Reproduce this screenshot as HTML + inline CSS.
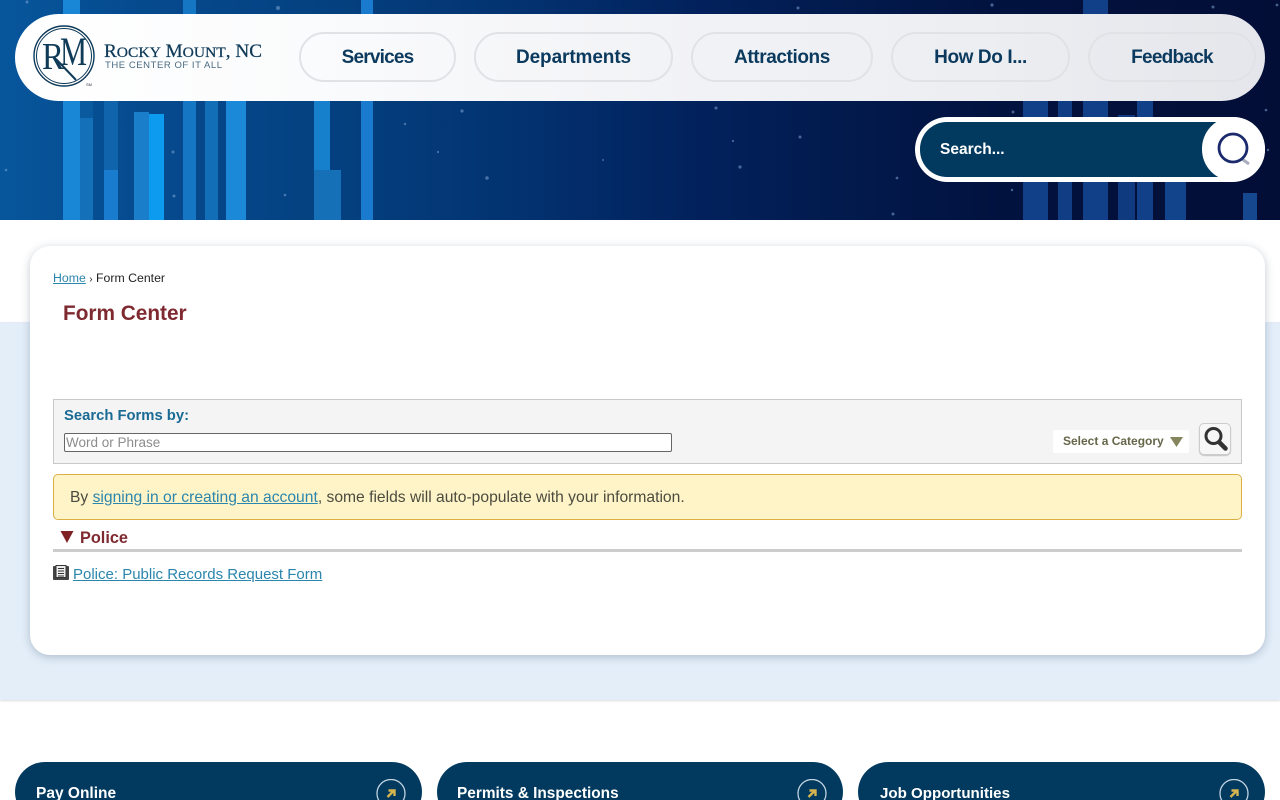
<!DOCTYPE html>
<html lang="en"><head><meta charset="utf-8"><title>Form Center | Rocky Mount, NC</title>
<style>
*{box-sizing:border-box}
html,body{margin:0;padding:0;width:1280px;height:800px;overflow:hidden;background:#fff;font-family:"Liberation Sans",sans-serif}
#page{position:relative;width:1280px;height:800px;overflow:hidden;background:#fff}
.a{position:absolute}
#hdr{left:0;top:0;width:1280px;height:220px;overflow:hidden;background:linear-gradient(90deg,#07569c 0,#064b8f 130px,#04407f 340px,#033270 520px,#02215c 700px,#021a4c 850px,#02123f 1000px,#020e36 1280px)}
.b{position:absolute}
#nav{left:15px;top:14px;width:1250px;height:87px;border-radius:43.5px;background:linear-gradient(90deg,#fff 0,#fafbfc 300px,#f2f3f6 640px,#eceef2 960px,#e5e6eb 1250px)}
.btn{position:absolute;top:32px;height:50px;border:2px solid #e1e2e6;border-radius:25px;color:#0b3a5e;font-weight:bold;font-size:19px;line-height:48px;text-align:center}
#search{left:915px;top:117px;width:350px;height:65px;border-radius:32.5px;background:#fff}
#sin{left:920px;top:122px;width:310px;height:55px;border-radius:27px 0 0 27px;background:#023a5f;color:#fff;font-size:15.5px;font-weight:bold;line-height:55px;padding-left:20px}
#sc{left:1202px;top:117px;width:63px;height:64px;border-radius:32px;background:#fff}
#band{left:0;top:322px;width:1280px;height:378px;background:#e3eef9;box-shadow:0 1px 2px rgba(0,0,0,.14)}
#card{left:30px;top:246px;width:1235px;height:409px;border-radius:20px;background:#fff;box-shadow:0 2px 9px rgba(40,60,90,.28)}
a{color:#2b86ad;text-decoration:underline}
.tile{position:absolute;top:762px;height:60px;border-radius:30px;background:#023a5f;color:#fff;font-weight:bold;line-height:63px;padding-left:21px}
.tile svg{position:absolute;top:17px}
</style></head><body><div id="page">
<div class="a" id="hdr">
<div class="b" style="left:63px;top:0;width:17px;height:220px;background:#1a87d6"></div>
<div class="b" style="left:80px;top:118px;width:13px;height:102px;background:#1470b8"></div>
<div class="b" style="left:80px;top:100px;width:13px;height:18px;background:#0a5aa0"></div>
<div class="b" style="left:104px;top:100px;width:14px;height:70px;background:#0f64ac"></div>
<div class="b" style="left:104px;top:170px;width:14px;height:50px;background:#1a7cce"></div>
<div class="b" style="left:134px;top:112px;width:15px;height:108px;background:#1a7ecb"></div>
<div class="b" style="left:149px;top:114px;width:15px;height:106px;background:#0c9bee"></div>
<div class="b" style="left:183px;top:0;width:13px;height:220px;background:#1577c3"></div>
<div class="b" style="left:205px;top:100px;width:13px;height:120px;background:#126eb6"></div>
<div class="b" style="left:226px;top:100px;width:20px;height:120px;background:#1b88d8"></div>
<div class="b" style="left:314px;top:100px;width:16px;height:70px;background:#1680cc"></div>
<div class="b" style="left:314px;top:170px;width:27px;height:50px;background:#1570b8"></div>
<div class="b" style="left:361px;top:0;width:12px;height:220px;background:#1a7bce"></div>
<div class="b" style="left:1023px;top:100px;width:25px;height:120px;background:#113f88"></div>
<div class="b" style="left:1058px;top:100px;width:14px;height:120px;background:#103d84"></div>
<div class="b" style="left:1083px;top:0;width:25px;height:220px;background:#124088"></div>
<div class="b" style="left:1118px;top:115px;width:17px;height:105px;background:#103a80"></div>
<div class="b" style="left:1137px;top:100px;width:16px;height:120px;background:#114088"></div>
<div class="b" style="left:1165px;top:182px;width:21px;height:38px;background:#12448c"></div>
<div class="b" style="left:1243px;top:193px;width:14px;height:27px;background:#15488e"></div>
<svg class="b" style="left:0;top:0" width="1280" height="220" fill="#7fa6d6" fill-opacity=".55">
<circle cx="27" cy="2" r="1.5"/><circle cx="278" cy="8" r="2"/><circle cx="173" cy="152" r="1.5"/><circle cx="6" cy="170" r="1.3"/><circle cx="174" cy="196" r="1.5"/><circle cx="285" cy="195" r="1.3"/><circle cx="462" cy="111" r="1.6"/><circle cx="405" cy="124" r="1.2"/><circle cx="487" cy="178" r="1.8"/><circle cx="438" cy="152" r="1.1"/><circle cx="603" cy="160" r="1"/><circle cx="716" cy="108" r="1.5"/><circle cx="733" cy="141" r="1.1"/><circle cx="800" cy="137" r="1.5"/><circle cx="740" cy="167" r="1.6"/><circle cx="893" cy="214" r="1.5"/><circle cx="897" cy="178" r="1.4"/><circle cx="798" cy="8" r="1.5"/><circle cx="992" cy="5" r="1.6"/><circle cx="1213" cy="7" r="1.5"/><circle cx="1277" cy="5" r="1.4"/><circle cx="1013" cy="112" r="1.5"/><circle cx="1266" cy="110" r="1.3"/><circle cx="1012" cy="190" r="1.2"/><circle cx="1268" cy="150" r="1.2"/>
</svg>
</div>

<div class="a" id="nav"></div>
<svg class="a" style="left:25px;top:15px" width="245" height="80">
<circle cx="39" cy="41" r="30" fill="none" stroke="#0f3a58" stroke-width="1.4"/>
<circle cx="39" cy="41" r="27.5" fill="none" stroke="#0f3a58" stroke-width="1"/>
<text x="17" y="54" font-family="Liberation Serif,serif" font-size="38" fill="#0f3a58" textLength="22" lengthAdjust="spacingAndGlyphs">R</text>
<text x="35" y="50" font-family="Liberation Serif,serif" font-size="40" fill="#0f3a58" textLength="27" lengthAdjust="spacingAndGlyphs">M</text>
<line x1="31" y1="44" x2="51" y2="65" stroke="#0f3a58" stroke-width="2"/>
<text x="61" y="71" font-family="Liberation Sans,sans-serif" font-size="4" fill="#334">SM</text>
<text x="79" y="42" font-family="Liberation Serif,serif" font-size="18.500" fill="#0f3a58" stroke="#0f3a58" stroke-width=".25" textLength="158" lengthAdjust="spacingAndGlyphs">R<tspan font-size="15">OCKY</tspan> M<tspan font-size="15">OUNT</tspan>, NC</text>
<text x="80" y="53" font-family="Liberation Sans,sans-serif" font-size="9.500" fill="#4a6a80" textLength="117" lengthAdjust="spacing">THE CENTER OF IT ALL</text>
</svg>
<div class="btn" style="left:299px;width:157px;letter-spacing:-.8px">Services</div>
<div class="btn" style="left:474px;width:199px;letter-spacing:-.1px">Departments</div>
<div class="btn" style="left:691px;width:182px;letter-spacing:-.4px">Attractions</div>
<div class="btn" style="left:891px;width:179px;letter-spacing:-.4px">How Do I...</div>
<div class="btn" style="left:1088px;width:168px;letter-spacing:-.75px">Feedback</div>

<div class="a" id="search"></div>
<div class="a" id="sin">Search...</div>
<div class="a" id="sc"></div>
<svg class="a" style="left:1210px;top:126px" width="46" height="46" fill="none">
<line x1="32" y1="33" x2="39" y2="38" stroke="#a9adbd" stroke-width="3"/>
<circle cx="23" cy="22" r="14" stroke="#1b2a6d" stroke-width="2.800"/>
</svg>

<div class="a" id="band"></div>
<div class="a" id="card"></div>
<div class="a" style="left:53px;top:271px;font-size:12.300px;color:#222;line-height:15px"><a href="#">Home</a> <span style="font-size:10px">›</span> Form Center</div>
<div class="a" style="left:63px;top:300px;font-size:20.800px;font-weight:bold;color:#7f2a30;line-height:27px">Form Center</div>

<div class="a" style="left:53px;top:399px;width:1189px;height:65px;background:#f4f4f4;border:1px solid #c9c9c9"></div>
<div class="a" style="left:64px;top:407px;font-size:14.800px;font-weight:bold;color:#1a6a94;line-height:19px">Search Forms by:</div>
<div class="a" style="left:64px;top:433px;width:608px;height:19px;background:#fff;border:1px solid #666;border-radius:2px;font-size:13.500px;color:#8d8d8d;line-height:17px;padding-left:1px">Word or Phrase</div>
<div class="a" style="left:1053px;top:430px;width:136px;height:23px;background:#fff;border-radius:2px;font-size:12px;font-weight:bold;color:#66664a;line-height:22px;padding-left:10px">Select a Category</div>
<svg class="a" style="left:1170px;top:437px" width="13" height="10"><path d="M0 0H13L6.500 10Z" fill="#85855e"/></svg>
<div class="a" style="left:1199px;top:423px;width:32px;height:32px;background:#f7f7f7;border:1px solid #ccc;border-radius:5px;box-shadow:0 1px 1px rgba(0,0,0,.2)"></div>
<svg class="a" style="left:1199px;top:423px" width="32" height="32" fill="none"><circle cx="14.500" cy="13" r="7.500" stroke="#333" stroke-width="3"/><line x1="20.500" y1="19.500" x2="26.500" y2="25.500" stroke="#333" stroke-width="4.500" stroke-linecap="round"/></svg>

<div class="a" style="left:53px;top:474px;width:1189px;height:46px;background:#fff4c8;border:1px solid #dcaf45;border-radius:5px;font-size:15.650px;color:#4b4b3e;line-height:45px;padding-left:16px">By <a href="#">signing in or creating an account</a>, some fields will auto-populate with your information.</div>

<svg class="a" style="left:60px;top:531px" width="14" height="12"><path d="M0.500 0H13.500L7 12Z" fill="#7f2226"/></svg>
<div class="a" style="left:80px;top:528px;font-size:16.300px;font-weight:bold;color:#7f2a30;line-height:20px">Police</div>
<div class="a" style="left:53px;top:549px;width:1189px;height:3px;background:#cccccc"></div>

<svg class="a" style="left:53px;top:565px" width="16" height="15"><rect x="0" y="1" width="16" height="14" rx="1" fill="#444"/><rect x="3" y="0.500" width="10" height="12" fill="#eee" stroke="#333"/><path d="M5 3.500h6M5 6h6M5 8.500h6M5 11h6" stroke="#333"/></svg>
<div class="a" style="left:73px;top:566px;font-size:15px;line-height:18px"><a href="#">Police: Public Records Request Form</a></div>

<div class="tile" style="left:15px;width:407px;font-size:15.500px">Pay Online<svg style="left:361px" width="30" height="30" fill="none"><circle cx="15" cy="14.500" r="14" stroke="#c5d6e4" stroke-width="1.300"/><path d="M11.500 18L17.500 12M12.500 11.500H18.500V17" stroke="#d6b44f" stroke-width="2.400"/></svg></div>
<div class="tile" style="left:437px;width:406px;font-size:15.400px;padding-left:20px">Permits &amp; Inspections<svg style="left:360px" width="30" height="30" fill="none"><circle cx="15" cy="14.500" r="14" stroke="#c5d6e4" stroke-width="1.300"/><path d="M11.500 18L17.500 12M12.500 11.500H18.500V17" stroke="#d6b44f" stroke-width="2.400"/></svg></div>
<div class="tile" style="left:858px;width:407px;font-size:15.100px;padding-left:22px">Job Opportunities<svg style="left:361px" width="30" height="30" fill="none"><circle cx="15" cy="14.500" r="14" stroke="#c5d6e4" stroke-width="1.300"/><path d="M11.500 18L17.500 12M12.500 11.500H18.500V17" stroke="#d6b44f" stroke-width="2.400"/></svg></div>
</div></body></html>
